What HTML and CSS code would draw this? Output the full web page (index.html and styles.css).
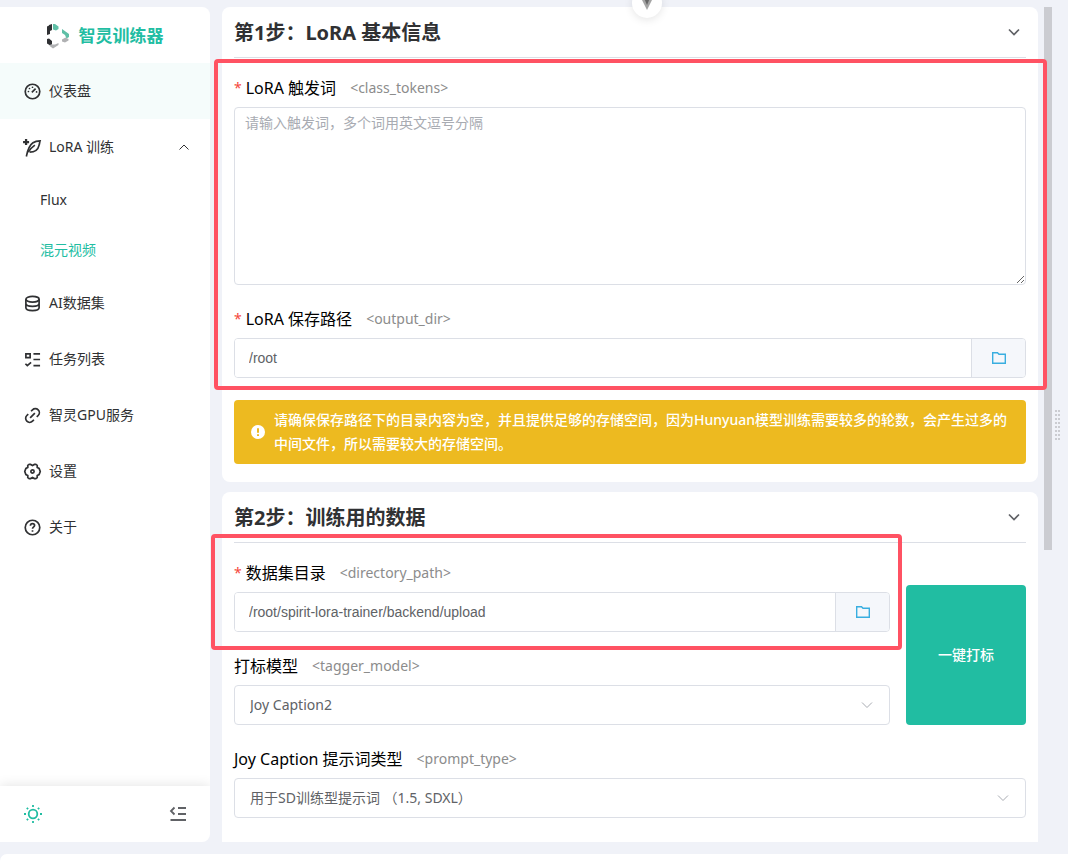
FILE: index.html
```html
<!DOCTYPE html>
<html lang="zh-CN">
<head>
<meta charset="utf-8">
<title>智灵训练器</title>
<link rel="stylesheet" href="styles.css">
</head>
<body>
<div class="layout">
  <aside class="sidebar">
    <div class="brand">
      <svg class="brand-logo" viewBox="0 0 24 24" aria-hidden="true">
        <path fill="#2f3033" d="M0 2.500 2 1.500V1L5 0v6L3 7v3L0 11zM0 15l2-.5 3 2.500v3.500L2.500 21 0 19.500z"/>
        <path fill="#5fbfa6" d="M6 0h2l3.500 2.500v2.500L9 6.500 6 5.500zM15 5l7 5v3l-2.500 1.500L18 11l-3-2z"/>
        <path fill="#b0b1b3" d="M15 15.500 18.500 13.500 21.500 15v1.500L18 18.500 15 17.500zM2 21.500l3-1h3L11.500 19v2L6 24.500z"/>
      </svg>
      <span class="brand-name">智灵训练器</span>
    </div>
    <nav class="menu">
      <a class="menu-item menu-item-current" href="#">
        <svg class="icon" viewBox="0 0 18 18"><circle cx="9" cy="9" r="7.700"/><path d="m8.300 10 4-4"/><path class="dots" d="M9 4.500h.01M5.800 5.800h.01M4.700 9h.01M13.300 9.500h.01"/></svg>
        <span>仪表盘</span>
      </a>
      <a class="menu-item" href="#">
        <svg class="icon" viewBox="0 0 18 18"><path d="M2.500 18.500C3.500 14 4.500 7.500 9.500 4 12 2.300 14.500 2 17 2c-.5 1.800-.5 2.500-1 4.500-1 4.500-4.500 7.500-10 7.500"/><path d="M4.500 14C6 10.800 8 9 11.500 6.500"/><path class="spark" d="M2.200 0v6.400M-1 3.200h6.400"/></svg>
        <span>LoRA 训练</span>
        <svg class="menu-arrow" viewBox="0 0 10 6"><path d="m.5 5.500 4.500-4.500 4.500 4.500"/></svg>
      </a>
      <a class="submenu-item" href="#">Flux</a>
      <a class="submenu-item submenu-item-active" href="#">混元视频</a>
      <a class="menu-item" href="#">
        <svg class="icon" viewBox="0 0 18 18"><ellipse cx="9" cy="4.500" rx="7" ry="3"/><path d="M2 4.500v9c0 1.700 3 3 7 3s7-1.300 7-3v-9M2 9c0 1.700 3 3 7 3s7-1.300 7-3"/></svg>
        <span>AI数据集</span>
      </a>
      <a class="menu-item" href="#">
        <svg class="icon" viewBox="0 0 18 18"><path d="M2 3h4.500v4H2zM10 3h7M10 9h7M10 15.500h7M1.500 13.500l2 2L7.500 12"/></svg>
        <span>任务列表</span>
      </a>
      <a class="menu-item" href="#">
        <svg class="icon" viewBox="0 0 18 18"><path d="m6.500 11.500 5-5M7.500 4.500 9 3a4.200 4.200 0 0 1 6 6l-1.500 1.500M10.500 13.500 9 15a4.200 4.200 0 0 1-6-6l1.500-1.500"/></svg>
        <span>智灵GPU服务</span>
      </a>
      <a class="menu-item" href="#">
        <svg class="icon" viewBox="0 0 18 18"><path d="M5.500 1.500H7L9 2.700l2-1.200h1.500l1.500 1v2.300l2 1L17.200 9 16 12.200l-2 1v2.300l-1.500 1H11L9 15.300l-2 1.200H5.500l-1.500-1v-2.300l-2-1L.8 9 2 5.800l2-1V2.500z"/><circle cx="9" cy="9" r="1.700"/></svg>
        <span>设置</span>
      </a>
      <a class="menu-item" href="#">
        <svg class="icon" viewBox="0 0 18 18"><circle cx="9" cy="9" r="7.700"/><path d="M6.800 7.200C6.800 5.800 7.700 5 9 5s2.200.8 2.200 2S9 8.500 9 10.300M9 12v1.600"/></svg>
        <span>关于</span>
      </a>
    </nav>
    <div class="sidebar-footer">
      <button class="icon-button theme-button" type="button" aria-label="切换主题">
        <svg viewBox="0 0 18 18"><circle cx="9" cy="9" r="4.300"/><path d="M9 0v2M9 16v2M0 9h2M16 9h2M2.800 2.800l1.300 1.300M13.900 13.900l1.300 1.300M2.800 15.200l1.300-1.300M13.900 4.100l1.300-1.300"/></svg>
      </button>
      <button class="icon-button fold-button" type="button" aria-label="收起菜单">
        <svg viewBox="0 0 18 18"><path d="M5.500 2.500 2 6l3.500 3.500M9 3h8M9 9h8M1.500 15H17"/></svg>
      </button>
    </div>
  </aside>

  <main class="content">
    <section class="card">
      <header class="card-header">
        <h2>第1步：LoRA 基本信息</h2>
        <button class="collapse-button" type="button" aria-label="折叠"><svg viewBox="0 0 12 8"><path d="m1 1.500 5 5 5-5"/></svg></button>
      </header>
      <div class="fields">
        <div class="fields highlight">
          <div class="field">
            <label for="class-tokens"><span class="required">*</span>LoRA 触发词<span class="key">&lt;class_tokens&gt;</span></label>
            <textarea id="class-tokens" placeholder="请输入触发词，多个词用英文逗号分隔"></textarea>
          </div>
          <div class="field">
            <label for="output-dir"><span class="required">*</span>LoRA 保存路径<span class="key">&lt;output_dir&gt;</span></label>
            <div class="path-input">
              <input id="output-dir" type="text" value="/root">
              <button type="button" aria-label="选择目录"><svg viewBox="0 0 14 12"><path d="M.7.700h4.800l1.500 1.600h6.300v9H.7z"/></svg></button>
            </div>
          </div>
          <span class="frame frame-output"></span>
        </div>
        <div class="alert">
          <svg viewBox="0 0 14 14" aria-hidden="true"><circle cx="7" cy="7" r="7"/><path d="M7 3.300v4.500M7 9.300v1.700"/></svg>
          <p>请确保保存路径下的目录内容为空，并且提供足够的存储空间，因为Hunyuan模型训练需要较多的轮数，会产生过多的中间文件，所以需要较大的存储空间。</p>
        </div>
      </div>
    </section>

    <section class="card card-last">
      <header class="card-header">
        <h2>第2步：训练用的数据</h2>
        <button class="collapse-button" type="button" aria-label="折叠"><svg viewBox="0 0 12 8"><path d="m1 1.500 5 5 5-5"/></svg></button>
      </header>
      <div class="fields">
        <div class="tagging">
          <div class="fields">
            <div class="field highlight">
              <label for="directory-path"><span class="required">*</span>数据集目录<span class="key">&lt;directory_path&gt;</span></label>
              <div class="path-input">
                <input id="directory-path" type="text" value="/root/spirit-lora-trainer/backend/upload">
                <button type="button" aria-label="选择目录"><svg viewBox="0 0 14 12"><path d="M.7.700h4.800l1.500 1.600h6.300v9H.7z"/></svg></button>
              </div>
              <span class="frame frame-directory"></span>
            </div>
            <div class="field">
              <label for="tagger-model">打标模型<span class="key">&lt;tagger_model&gt;</span></label>
              <div class="select">
                <select id="tagger-model"><option>Joy Caption2</option></select>
                <svg viewBox="0 0 12 8"><path d="m1 1.500 5 5 5-5"/></svg>
              </div>
            </div>
          </div>
          <button class="primary-button" type="button">一键打标</button>
        </div>
        <div class="field">
          <label for="prompt-type">Joy Caption 提示词类型<span class="key">&lt;prompt_type&gt;</span></label>
          <div class="select">
            <select id="prompt-type"><option>用于SD训练型提示词 （1.5, SDXL）</option></select>
            <svg viewBox="0 0 12 8"><path d="m1 1.500 5 5 5-5"/></svg>
          </div>
        </div>
      </div>
    </section>
    <div class="scroll-thumb"></div>
  </main>

  <div class="splitter" role="separator"><span class="grip"></span></div>
</div>
<div class="drawer"></div>
<button class="pull-button" type="button" aria-label="展开"><svg viewBox="0 0 12 12"><path class="outer" d="M0 0h12L6 12z"/><path class="inner" d="M3 0h6L6 7z"/></svg></button>
</body>
</html>
```
FILE: styles.css
```css
:root {
  --primary: #21bda2;
  --page: #f0f2f8;
  --border: #dcdfe6;
  --text: #303133;
  --regular: #606266;
  --mark: #ff5263;
}

* {
  box-sizing: border-box;
}

body {
  margin: 0;
  padding-top: 7px;
  height: 100vh;
  display: flex;
  flex-direction: column;
  gap: 12px;
  position: relative;
  overflow: hidden;
  background: var(--page);
  color: var(--text);
  font: 14px/24px "Noto Sans", "Noto Sans CJK SC", sans-serif;
}

button {
  padding: 0;
  border: 0;
  background: none;
  font: inherit;
  cursor: pointer;
}

svg {
  display: block;
  flex: none;
  fill: none;
  stroke: currentColor;
}

.layout {
  flex: 1;
  min-height: 0;
  display: flex;
}

.drawer {
  flex: none;
  height: 7px;
  border-radius: 8px 0 0 0;
  background: #fff;
}

/* Sidebar */
.sidebar {
  width: 210px;
  flex: none;
  display: flex;
  flex-direction: column;
  overflow: hidden;
  border-radius: 0 8px 8px 0;
  background: #fff;
}

.brand {
  height: 56px;
  flex: none;
  padding-top: 2px;
  display: flex;
  align-items: center;
  justify-content: center;
  gap: 8px;
  color: var(--primary);
  font-size: 17px;
  font-weight: 700;
}

.brand-logo {
  width: 24px;
  height: 24px;
  stroke: none;
  overflow: visible;
}

.menu {
  flex: 1;
  min-height: 0;
}

.menu-item {
  height: 56px;
  padding: 0 21px 0 24px;
  display: flex;
  align-items: center;
  gap: 8px;
  color: var(--text);
  text-decoration: none;
}

.menu-item-current {
  background: #f5fcfb;
}

.icon {
  width: 17px;
  height: 17px;
  stroke-width: 1.8;
  overflow: visible;
}

.dots {
  stroke-linecap: round;
}

.spark {
  stroke-width: 2.4;
}

.menu-arrow {
  width: 10px;
  height: 6px;
  margin-left: auto;
}

.submenu-item {
  height: 50px;
  padding-left: 40px;
  display: flex;
  align-items: center;
  color: var(--text);
  text-decoration: none;
}

.submenu-item-active {
  color: var(--primary);
}

.sidebar-footer {
  height: 56px;
  flex: none;
  padding: 0 23px 0 24px;
  display: flex;
  align-items: center;
  justify-content: space-between;
  box-shadow: 0 0 12px rgba(0, 0, 0, 0.12);
}

.icon-button svg {
  width: 18px;
  height: 18px;
  stroke-width: 1.8;
}

.theme-button {
  color: var(--primary);
}

.fold-button {
  color: var(--regular);
}

/* Content */
.content {
  flex: 1;
  min-width: 0;
  padding: 0 14px 0 12px;
  display: flex;
  flex-direction: column;
  gap: 10px;
  position: relative;
  overflow: hidden;
}

.scroll-thumb {
  position: absolute;
  top: 0;
  right: 0;
  width: 8px;
  height: 65%;
  background: #cbccd1;
}

.card {
  flex: none;
  padding: 0 12px 18px;
  border-radius: 8px;
  background: #fff;
}

.card-last {
  padding-bottom: 40px;
}

.card-header {
  height: 51px;
  margin-bottom: 18px;
  padding-right: 6px;
  display: flex;
  align-items: center;
  justify-content: space-between;
  border-bottom: 1px solid var(--border);
}

.card-header h2 {
  margin: 0;
  padding-top: 2px;
  font-size: 20px;
  font-weight: 700;
}

.collapse-button {
  color: var(--regular);
}

.collapse-button svg {
  width: 12px;
  height: 8px;
  stroke-width: 1.7;
}

.fields {
  display: flex;
  flex-direction: column;
  gap: 22px;
}

.field {
  display: flex;
  flex-direction: column;
  gap: 7px;
}

label {
  height: 24px;
  display: flex;
  align-items: center;
  color: #000;
  font-size: 16px;
}

.required {
  margin-right: 4px;
  color: #f5483b;
  font-size: 14px;
}

.key {
  margin-left: 14px;
  color: #8c8c8c;
  font-size: 14px;
}

textarea {
  height: 178px;
  padding: 4px 10px;
  border: 1px solid var(--border);
  border-radius: 4px;
  background: #fff;
  color: var(--regular);
  font: 14px/21px "Noto Sans", "Noto Sans CJK SC", sans-serif;
  resize: vertical;
}

textarea::placeholder {
  color: #a8abb2;
}

.path-input {
  height: 40px;
  display: flex;
  overflow: hidden;
  border: 1px solid var(--border);
  border-radius: 4px;
}

.path-input input {
  flex: 1;
  min-width: 0;
  padding: 0 14px;
  border: 0;
  background: #fff;
  color: var(--regular);
  font: 14px "Liberation Sans", Arial, sans-serif;
}

.path-input button {
  width: 54px;
  display: grid;
  place-items: center;
  border-left: 1px solid var(--border);
  background: #f5f7fb;
  color: #39aee0;
}

.path-input svg {
  width: 14px;
  height: 12px;
  stroke-width: 1.4;
}

.select {
  height: 40px;
  display: grid;
  align-items: center;
}

.select > * {
  grid-area: 1 / 1;
}

.select select {
  width: 100%;
  height: 40px;
  padding: 0 36px 0 15px;
  appearance: none;
  border: 1px solid var(--border);
  border-radius: 4px;
  background: #fff;
  color: var(--regular);
  font: inherit;
}

.select svg {
  width: 12px;
  height: 8px;
  margin-right: 17px;
  justify-self: end;
  color: #a8abb2;
  pointer-events: none;
}

.alert {
  padding: 8px 12px 8px 17px;
  display: flex;
  align-items: center;
  gap: 9px;
  border-radius: 4px;
  background: #edba20;
  color: #fff;
  font-weight: 500;
}

.alert svg {
  width: 14px;
  height: 14px;
  fill: #fff;
  stroke: none;
}

.alert svg path {
  stroke: #edba20;
  stroke-width: 2;
}

.alert p {
  margin: 0;
}

.tagging {
  display: grid;
  grid-template-columns: 1fr 120px;
  gap: 16px;
}

.primary-button {
  height: 140px;
  align-self: end;
  border-radius: 4px;
  background: var(--primary);
  color: #fff;
  font-weight: 500;
}

/* Frames drawn over the fields to call attention to them */
.highlight {
  position: relative;
}

.frame {
  position: absolute;
  z-index: 2;
  border: 4px solid var(--mark);
  border-radius: 4px;
  pointer-events: none;
}

.frame-output {
  inset: -17px -21px -12px -20px;
}

.frame-directory {
  inset: -27px -12px -18px -23px;
}

/* Splitter */
.splitter {
  width: 16px;
  flex: none;
  padding-left: 3px;
  display: flex;
  align-items: center;
}

.grip {
  width: 5px;
  height: 30px;
  background:
    repeating-linear-gradient(90deg, transparent 0 2px, var(--page) 2px 3px),
    repeating-linear-gradient(#cbccd1 0 2px, transparent 2px 4px);
}

.pull-button {
  position: absolute;
  top: -12px;
  left: 647px;
  width: 30px;
  height: 30px;
  margin-left: -15px;
  display: grid;
  place-items: center;
  padding-top: 2px;
  border-radius: 50%;
  background: #fff;
  box-shadow: 0 2px 8px rgba(0, 0, 0, 0.1);
}

.pull-button svg {
  width: 12px;
  height: 12px;
  stroke: none;
}

.outer {
  fill: #a5a5a5;
}

.inner {
  fill: #666;
}
```
